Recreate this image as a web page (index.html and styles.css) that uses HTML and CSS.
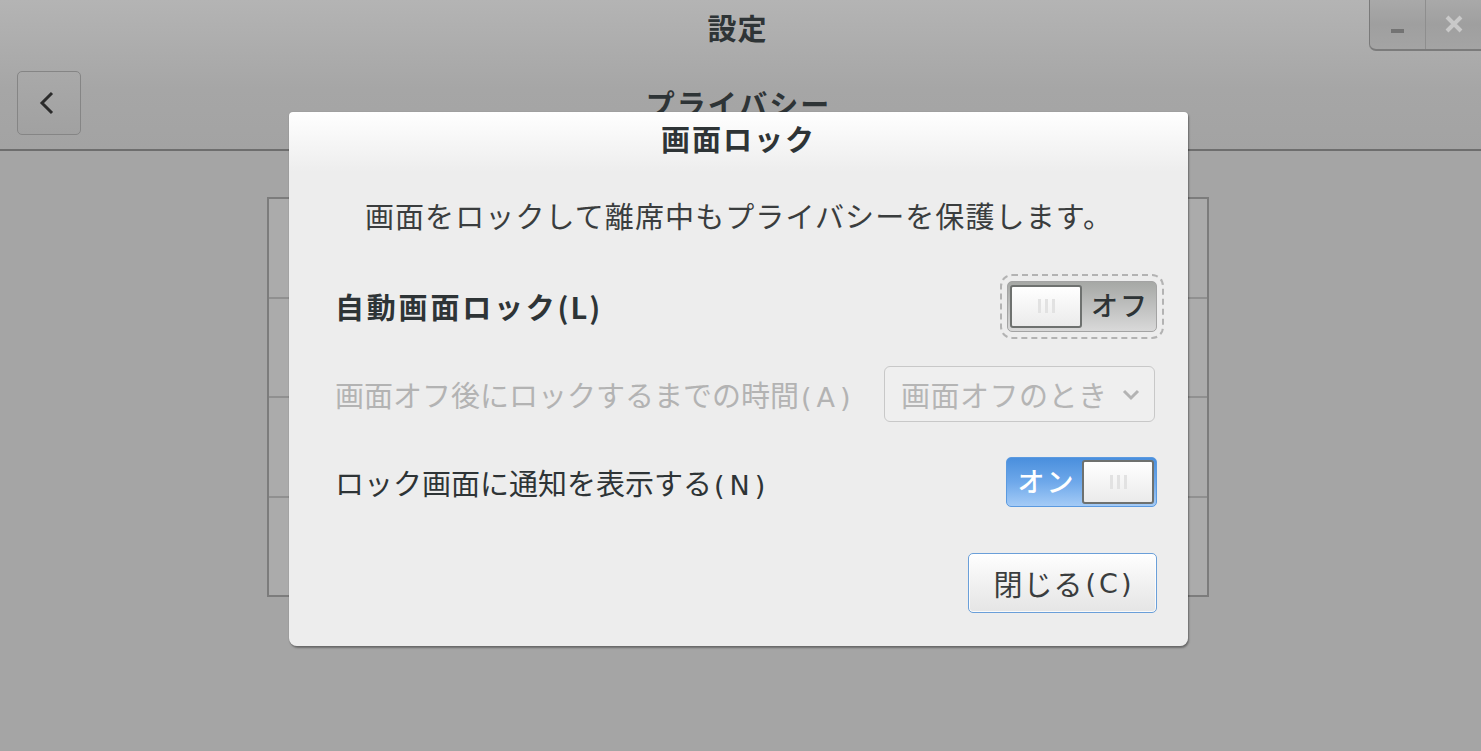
FILE: index.html
```html
<!DOCTYPE html>
<html lang="ja">
<head>
<meta charset="utf-8">
<title>設定</title>
<link rel="stylesheet" href="styles.css">
</head>
<body>
<div class="window">
  <header class="headerbar">
    <div class="titlerow">
      <div></div>
      <div class="title">設定</div>
      <div class="wincontrols">
        <div class="wbtn"><span class="minimize"></span></div>
        <div class="wbtn">
          <svg width="18" height="18" viewBox="0 0 18 18"><path d="M2 2 L16 16 M16 2 L2 16" stroke="#c9c9c9" stroke-width="4" fill="none"/></svg>
        </div>
      </div>
    </div>
    <div class="subrow">
      <div class="backbtn">
        <svg width="20" height="26" viewBox="0 0 20 26"><polyline points="15,3 5,13 15,23" stroke="#2b2b2b" stroke-width="3" fill="none"/></svg>
      </div>
      <div class="subtitle">プライバシー</div>
      <div></div>
    </div>
  </header>
  <main class="content">
    <div class="listbox">
      <div class="listrow"></div>
      <div class="listrow"></div>
      <div class="listrow"></div>
      <div class="listrow"></div>
    </div>
  </main>
</div>

<div class="dialog">
  <div class="dialog-title">画面ロック</div>
  <div class="dialog-body">
    <p class="desc">画面をロックして離席中もプライバシーを保護します。</p>
    <div class="row">
      <span class="label bold">自動画面ロック<span class="mn">(L)</span></span>
      <div class="switch off focused">
        <div class="knob"><span></span><span></span><span></span></div>
        <span class="swtext">オフ</span>
      </div>
    </div>
    <div class="row">
      <span class="label disabled">画面オフ後にロックするまでの時間<span class="mn">(A)</span></span>
      <div class="combo">
        <span>画面オフのとき</span>
        <svg width="18" height="12" viewBox="0 0 18 12"><polyline points="2,2 9,9 16,2" stroke="#b3b3b3" stroke-width="3" fill="none"/></svg>
      </div>
    </div>
    <div class="row">
      <span class="label">ロック画面に通知を表示する<span class="mn">(N)</span></span>
      <div class="switch on">
        <span class="swtext">オン</span>
        <div class="knob"><span></span><span></span><span></span></div>
      </div>
    </div>
    <div class="buttons">
      <div class="closebtn">閉じる<span class="mn">(C)</span></div>
    </div>
  </div>
</div>
</body>
</html>
```

FILE: styles.css
```css
* { box-sizing: border-box; }
html, body {
  margin: 0;
  padding: 0;
}
body {
  width: 1481px;
  height: 751px;
  overflow: hidden;
  background: #a5a5a5;
  font-family: "Noto Sans CJK JP", "Noto Sans", sans-serif;
  font-size: 29px;
  color: #2e3436;
  position: relative;
}
.window {
  display: flex;
  flex-direction: column;
  height: 751px;
}
.headerbar {
  height: 151px;
  border-bottom: 2px solid #6e6e6e;
  background: linear-gradient(#b4b4b4, #a6a6a6 60%, #a3a3a3);
  display: flex;
  flex-direction: column;
}
.titlerow {
  display: grid;
  grid-template-columns: 1fr auto 1fr;
  height: 54px;
}
.title {
  font-weight: bold;
  line-height: 54px;
  letter-spacing: 1px;
  color: #2e3436;
  margin-left: -6px;
}
.wincontrols {
  justify-self: end;
  align-self: start;
  display: flex;
  width: 112px;
  height: 51px;
  border-left: 1px solid #7a7a7a;
  border-bottom: 2px solid #7b7b7b;
  border-bottom-left-radius: 7px;
  background: linear-gradient(#a9a9a9, #9f9f9f 50%, #a4a4a4);
  overflow: hidden;
}
.wbtn {
  flex: 1;
  display: flex;
  align-items: center;
  justify-content: center;
}
.wbtn + .wbtn {
  border-left: 1px solid #8e8e8e;
  padding-bottom: 2px;
}
.minimize {
  display: block;
  width: 13px;
  height: 4px;
  background: #737373;
  margin-top: 12px;
}
.subrow {
  display: grid;
  grid-template-columns: 1fr auto 1fr;
  padding: 0 17px;
  margin-top: 17px;
  height: 64px;
  align-items: center;
}
.backbtn {
  width: 64px;
  height: 64px;
  border: 1px solid #858585;
  border-radius: 5px;
  background: linear-gradient(#a9a9a9, #a1a1a1);
  display: flex;
  align-items: center;
  justify-content: center;
  padding-right: 4px;
}
.subtitle {
  font-weight: bold;
  line-height: 64px;
  letter-spacing: 2px;
  margin-left: -4px;
}
.content {
  flex: 1;
  padding: 46px 0 0 267px;
  display: flex;
}
.listbox {
  width: 942px;
  height: 400px;
  border: 2px solid #7c7c7c;
  background: #ababab;
  display: flex;
  flex-direction: column;
}
.listrow {
  flex: 1;
  border-top: 2px solid #909090;
}
.listrow:first-child { border-top: none; }

/* dialog (overlay) */
.dialog {
  position: absolute;
  left: 289px;
  top: 112px;
  width: 899px;
  height: 534px;
  background: linear-gradient(#ffffff, #ededed 60px, #ededed);
  border-radius: 4px 4px 8px 8px;
  box-shadow: 1px 2px 2px rgba(0,0,0,0.35), 0 0 1px rgba(0,0,0,0.3);
  display: flex;
  flex-direction: column;
}
.dialog-title {
  height: 52px;
  line-height: 52px;
  text-align: center;
  font-weight: bold;
  letter-spacing: 2px;
  color: #2e3436;
}
.dialog-body {
  padding: 0 31px 0 46px;
  display: flex;
  flex-direction: column;
}
.desc {
  margin: 31px 0 27px -14px;
  line-height: 40px;
  text-align: center;
  color: #3a3d3e;
  letter-spacing: 1.1px;
}
.row {
  height: 88px;
  display: flex;
  align-items: center;
  justify-content: space-between;
}
.label { white-space: nowrap; }
.label.bold { font-weight: bold; letter-spacing: 2.8px; }
.label.disabled { color: #b3b3b3; }
.mn {
  font-family: "DejaVu Sans", "Noto Sans", sans-serif;
  font-size: 27px;
  letter-spacing: 5px;
  margin-left: 2px;
}
.label.bold .mn {
  font-family: "Noto Sans CJK JP", "Noto Sans", sans-serif;
  font-size: 29px;
  letter-spacing: 2px;
  margin-left: 0;
}

.switch {
  display: flex;
  align-items: center;
  border-radius: 5px;
  height: 51px;
  width: 150px;
  font-size: 27px;
}
.switch.off {
  background: linear-gradient(#a6a8a5, #bfc0bf 50%, #d9d9d9);
  border: 1px solid #a3a3a3;
  padding: 3px 2px 3px 2px;
}
.switch.focused {
  outline: 2px dashed #b3b3b3;
  outline-offset: 5px;
}
.switch.on {
  width: 151px;
  height: 50px;
  background: linear-gradient(#4a8fdd, #6ea8ea 50%, #a4cbf6);
  border: 1px solid #5b9ae0;
  padding: 2px 2px 2px 0;
  color: #ffffff;
}
.switch .swtext {
  flex: 1;
  text-align: center;
  letter-spacing: 2px;
  font-weight: 500;
  margin-top: -4px;
}
.switch.off .swtext { color: #2e3436; padding-left: 4px; }
.switch.on .swtext { padding-left: 4px; }
.knob {
  width: 72px;
  height: 100%;
  border: 2px solid #6e716f;
  border-radius: 3px;
  background: linear-gradient(#ffffff, #f3f3f3 60%, #ebebeb);
  display: flex;
  align-items: center;
  justify-content: center;
  gap: 4px;
}
.knob span {
  display: block;
  width: 3px;
  height: 14px;
  background: #e2e2e2;
}
.combo {
  width: 271px;
  height: 56px;
  border: 1px solid #c8c8c8;
  border-radius: 6px;
  background: #efefef;
  display: flex;
  align-items: center;
  justify-content: space-between;
  padding: 0 14px 0 16px;
  color: #b5b5b5;
  white-space: nowrap;
  margin-right: 2px;
  letter-spacing: 0.5px;
}
.combo svg { margin-top: 2px; }
.buttons {
  display: flex;
  justify-content: flex-end;
  margin-top: 27px;
}
.closebtn {
  width: 189px;
  height: 60px;
  border: 1px solid #6a9fd9;
  border-radius: 5px;
  background: linear-gradient(#ffffff, #f1f1f1 50%, #e5e5e5);
  box-shadow: inset 0 0 0 1px rgba(255,255,255,0.8);
  display: flex;
  align-items: center;
  justify-content: center;
  color: #3a3d3e;
  letter-spacing: 1px;
}
.closebtn .mn { letter-spacing: 3px; margin-right: -3px; }
```
